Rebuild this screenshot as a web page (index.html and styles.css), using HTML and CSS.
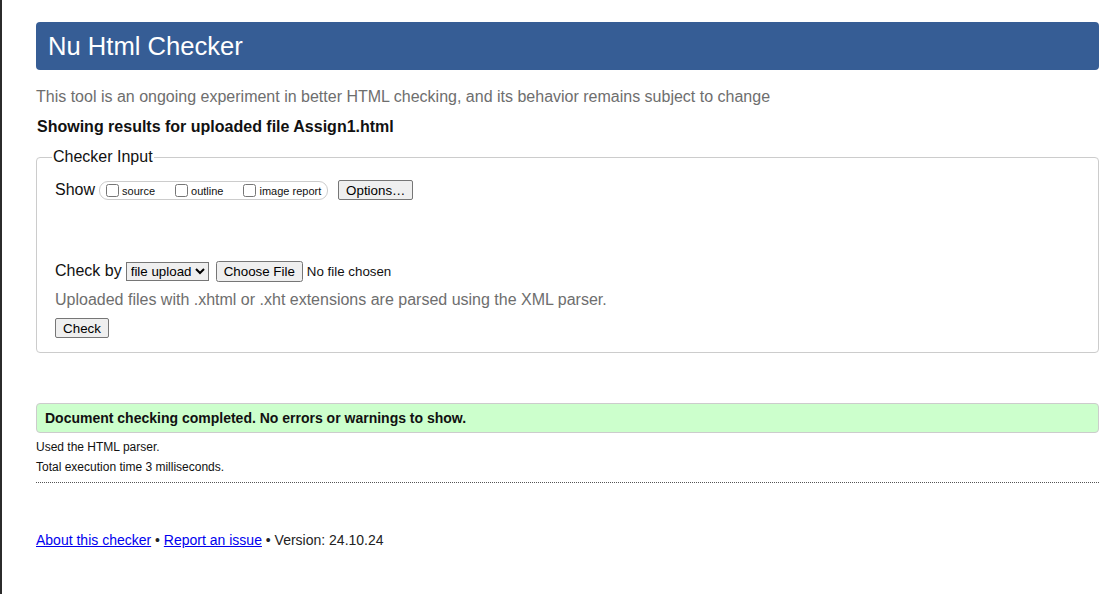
FILE: index.html
```html
<!DOCTYPE html>
<html lang="en">
<head>
<meta charset="utf-8">
<title>Showing results for Assign1.html - Nu Html Checker</title>
<link rel="stylesheet" href="styles.css">
</head>
<body>
<div class="page">
  <h1 class="banner">Nu Html Checker</h1>
  <p class="sub">This tool is an ongoing experiment in better HTML checking, and its behavior remains subject to change</p>
  <p class="showing">Showing results for uploaded file Assign1.html</p>
  <fieldset class="input">
    <legend>Checker Input</legend>
    <div class="row show-row">
      <span class="lbl">Show</span>
      <span class="opts">
        <label class="opt"><input type="checkbox"><span>source</span></label>
        <label class="opt"><input type="checkbox"><span>outline</span></label>
        <label class="opt"><input type="checkbox"><span>image report</span></label>
      </span>
      <button class="btn" type="button">Options…</button>
    </div>
    <div class="row by-row">
      <span class="lbl">Check by</span>
      <select class="sel"><option>file upload</option></select>
      <input class="file" type="file">
    </div>
    <p class="note">Uploaded files with .xhtml or .xht extensions are parsed using the XML parser.</p>
    <button class="btn check" type="button">Check</button>
  </fieldset>
  <div class="success">Document checking completed. No errors or warnings to show.</div>
  <p class="small">Used the HTML parser.</p>
  <p class="small last">Total execution time 3 milliseconds.</p>
  <p class="footer"><a href="#">About this checker</a> • <a href="#">Report an issue</a> • Version: 24.10.24</p>
</div>
</body>
</html>
```

FILE: styles.css
```css
html {
  background: #fff;
  border-left: 2px solid #2b2b2b;
  min-height: 100%;
  box-sizing: border-box;
}
body {
  margin: 0;
  font-family: "Liberation Sans", Arial, sans-serif;
  color: #111;
}
.page {
  padding: 22px 18px 0 34px;
}
.banner {
  margin: 0;
  height: 48px;
  line-height: 48px;
  padding-left: 12px;
  background: #365d95;
  color: #fff;
  font-size: 25.6px;
  font-weight: normal;
  border-radius: 4px;
}
.sub {
  margin: 18px 0 0;
  font-size: 16px;
  line-height: 18px;
  color: #6e6e6e;
}
.showing {
  margin: 12px 0 0 1px;
  font-size: 16px;
  line-height: 18px;
  font-weight: bold;
}
.input {
  margin: 12px 0 0;
  padding: 14px 18px 14px 18px;
  border: 1px solid #cccccc;
  border-radius: 4px;
  min-width: 0;
}
.input legend {
  font-size: 16px;
  line-height: 18px;
  padding: 0 1px;
  margin-left: -3px;
}
.row {
  display: flex;
  align-items: center;
  height: 20px;
}
.lbl {
  font-size: 16px;
  line-height: 18px;
}
.opts {
  display: inline-flex;
  align-items: center;
  margin-left: 4px;
  height: 17px;
  padding: 0 6px 0 2px;
  border: 1px solid #cccccc;
  border-radius: 9px;
}
.opt {
  display: inline-flex;
  align-items: center;
  font-size: 11px;
  margin-right: 16px;
}
.opt:last-child {
  margin-right: 0;
}
.opt input {
  margin: 0 3px 0 4px;
  width: 13px;
  height: 13px;
}
.opt span {
  position: relative;
  top: 1px;
}
.btn {
  font-family: "Liberation Sans", Arial, sans-serif;
  font-size: 13.33px;
  height: 20px;
  padding: 0 6px;
  border: 1px solid #767676;
  border-radius: 2px;
  background: #efefef;
  color: #000;
}
.show-row .btn {
  margin-left: 10px;
  width: 75px;
}
.by-row {
  margin-top: 61px;
}
.sel {
  margin-left: 4px;
  height: 19px;
  font-family: "Liberation Sans", Arial, sans-serif;
  font-size: 13.33px;
  width: 83px;
  border: 1px solid #767676;
  border-radius: 0;
  padding: 0;
}
.file {
  margin-left: 7px;
  font-family: "Liberation Sans", Arial, sans-serif;
  font-size: 13.33px;
}
.note {
  margin: 10px 0 0;
  font-size: 16px;
  line-height: 18px;
  color: #6e6e6e;
}
.check {
  display: block;
  margin-top: 9px;
  width: 54px;
}
.success {
  margin-top: 50px;
  height: 28px;
  line-height: 28px;
  padding-left: 8px;
  background: #ccffcc;
  border: 1px solid #cccccc;
  border-radius: 4px;
  font-size: 14px;
  font-weight: bold;
}
.small {
  margin: 7px 0 0;
  font-size: 12px;
  line-height: 14px;
}
.small + .small {
  margin-top: 6px;
}
.last {
  padding-bottom: 8px;
  border-bottom: 1px dotted #555;
}
.footer {
  margin: 49px 0 0;
  font-size: 14px;
  line-height: 16px;
  color: #222;
}
.footer a {
  color: #0000ee;
}
```
